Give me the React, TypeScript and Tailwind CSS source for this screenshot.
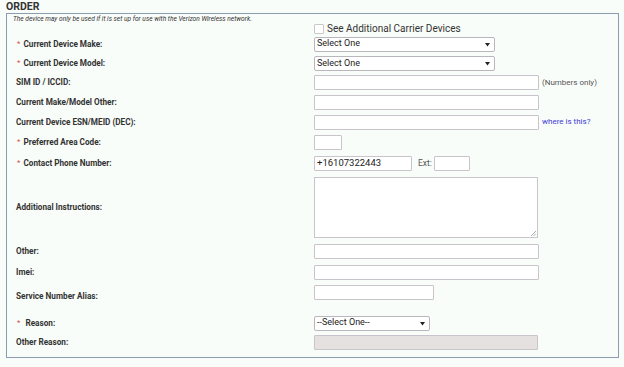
import { ReactNode } from "react";

const font = { fontFamily: "Roboto, 'Liberation Sans', sans-serif" };

const Label = ({ text, req, className = "" }: { text: string; req?: boolean; className?: string }) => (
  <div className={`w-[298px] shrink-0 flex items-center text-[8.2px] font-bold text-[#333] ${className}`}>
    {req ? (
      <span className="text-[#d9534f] font-normal ml-[1px] mr-[3px] text-[8px]">*</span>
    ) : null}
    <span>{text}</span>
  </div>
);

const Input = ({ w, value, disabled }: { w: string; value?: string; disabled?: boolean }) => (
  <div
    className={`${w} h-[15px] border border-[#c9c4cc] rounded-[1px] flex items-center pl-[2px] text-[9.5px] text-[#222] ${
      disabled ? "bg-[#e6e1e1]" : "bg-white"
    }`}
  >
    {value}
  </div>
);

const Select = ({ w, text }: { w: string; text: string }) => (
  <div className={`${w} h-[15px] border border-[#b9b6bd] rounded-[2px] bg-white flex items-center justify-between pl-[2px] pr-[4px] text-[9px] text-[#222]`}>
    <span>{text}</span>
    <svg width="5" height="5" viewBox="0 0 5 5">
      <polygon points="0,1 5,1 2.5,4.5" fill="#222" />
    </svg>
  </div>
);

const Row = ({ h, children, className = "" }: { h: string; children: ReactNode; className?: string }) => (
  <div className={`flex items-center ${h} ${className}`}>{children}</div>
);

const Note = ({ children, blue }: { children: ReactNode; blue?: boolean }) => (
  <span className={`ml-[3px] text-[8px] ${blue ? "text-[#3b3bd8]" : "text-[#555]"}`}>{children}</span>
);

export default function App() {
  return (
    <div className="w-[624px] h-[367px] bg-[#f9fdf9] pl-[6px] pr-[5px]" style={font}>
      <div className="h-[13px] text-[10.5px] font-bold text-[#333] leading-[13px]">ORDER</div>
      <div className="border border-[#8d9db0] pl-[9px] pr-[6px] h-[345px]">
        <div className="text-[6.6px] italic text-[#333] leading-[8px] pt-[1px] -ml-[3px]">
          The device may only be used if it is set up for use with the Verizon Wireless network.
        </div>
        <div className="flex items-center h-[11px] pl-[298px]">
          <div className="w-[10px] h-[10px] border border-[#c9c9c9] bg-white rounded-[1px]" />
          <span className="ml-[3px] text-[10px] text-[#333]">See Additional Carrier Devices</span>
        </div>
        <Row h="h-[20px]">
          <Label text="Current Device Make:" req />
          <Select w="w-[181px]" text="Select One" />
        </Row>
        <Row h="h-[19px]">
          <Label text="Current Device Model:" req />
          <Select w="w-[181px]" text="Select One" />
        </Row>
        <Row h="h-[19px]">
          <Label text="SIM ID / ICCID:" />
          <Input w="w-[225px]" />
          <Note>(Numbers only)</Note>
        </Row>
        <Row h="h-[20px]">
          <Label text="Current Make/Model Other:" />
          <Input w="w-[225px]" />
        </Row>
        <Row h="h-[20px]">
          <Label text="Current Device ESN/MEID (DEC):" />
          <Input w="w-[225px]" />
          <Note blue>where is this?</Note>
        </Row>
        <Row h="h-[21px]">
          <Label text="Preferred Area Code:" req />
          <Input w="w-[28px]" />
        </Row>
        <Row h="h-[20px]">
          <Label text="Contact Phone Number:" req />
          <Input w="w-[98px]" value="+16107322443" />
          <span className="ml-[6px] mr-[2px] text-[8.5px] text-[#555]">Ext:</span>
          <Input w="w-[36px]" />
        </Row>
        <Row h="h-[68px]">
          <Label text="Additional Instructions:" />
          <div className="relative w-[224px] h-[61px] border border-[#c9c4cc] bg-white">
            <svg className="absolute right-[1px] bottom-[1px]" width="5" height="5" viewBox="0 0 5 5">
              <line x1="0" y1="5" x2="5" y2="0" stroke="#999" strokeWidth="0.8" />
              <line x1="2.5" y1="5" x2="5" y2="2.5" stroke="#999" strokeWidth="0.8" />
            </svg>
          </div>
        </Row>
        <Row h="h-[21px]">
          <Label text="Other:" />
          <Input w="w-[225px]" />
        </Row>
        <Row h="h-[20px]">
          <Label text="Imei:" />
          <Input w="w-[225px]" />
        </Row>
        <Row h="h-[21px]" className="mb-[10px]">
          <Label text="Service Number Alias:" className="mt-[7px]" />
          <Input w="w-[120px]" />
        </Row>
        <Row h="h-[20px]">
          <Label text="Reason:" req className="[&>span:first-child]:mr-[5px]" />
          <Select w="w-[116px]" text="--Select One--" />
        </Row>
        <Row h="h-[19px]">
          <Label text="Other Reason:" />
          <Input w="w-[224px]" disabled />
        </Row>
      </div>
    </div>
  );
}
